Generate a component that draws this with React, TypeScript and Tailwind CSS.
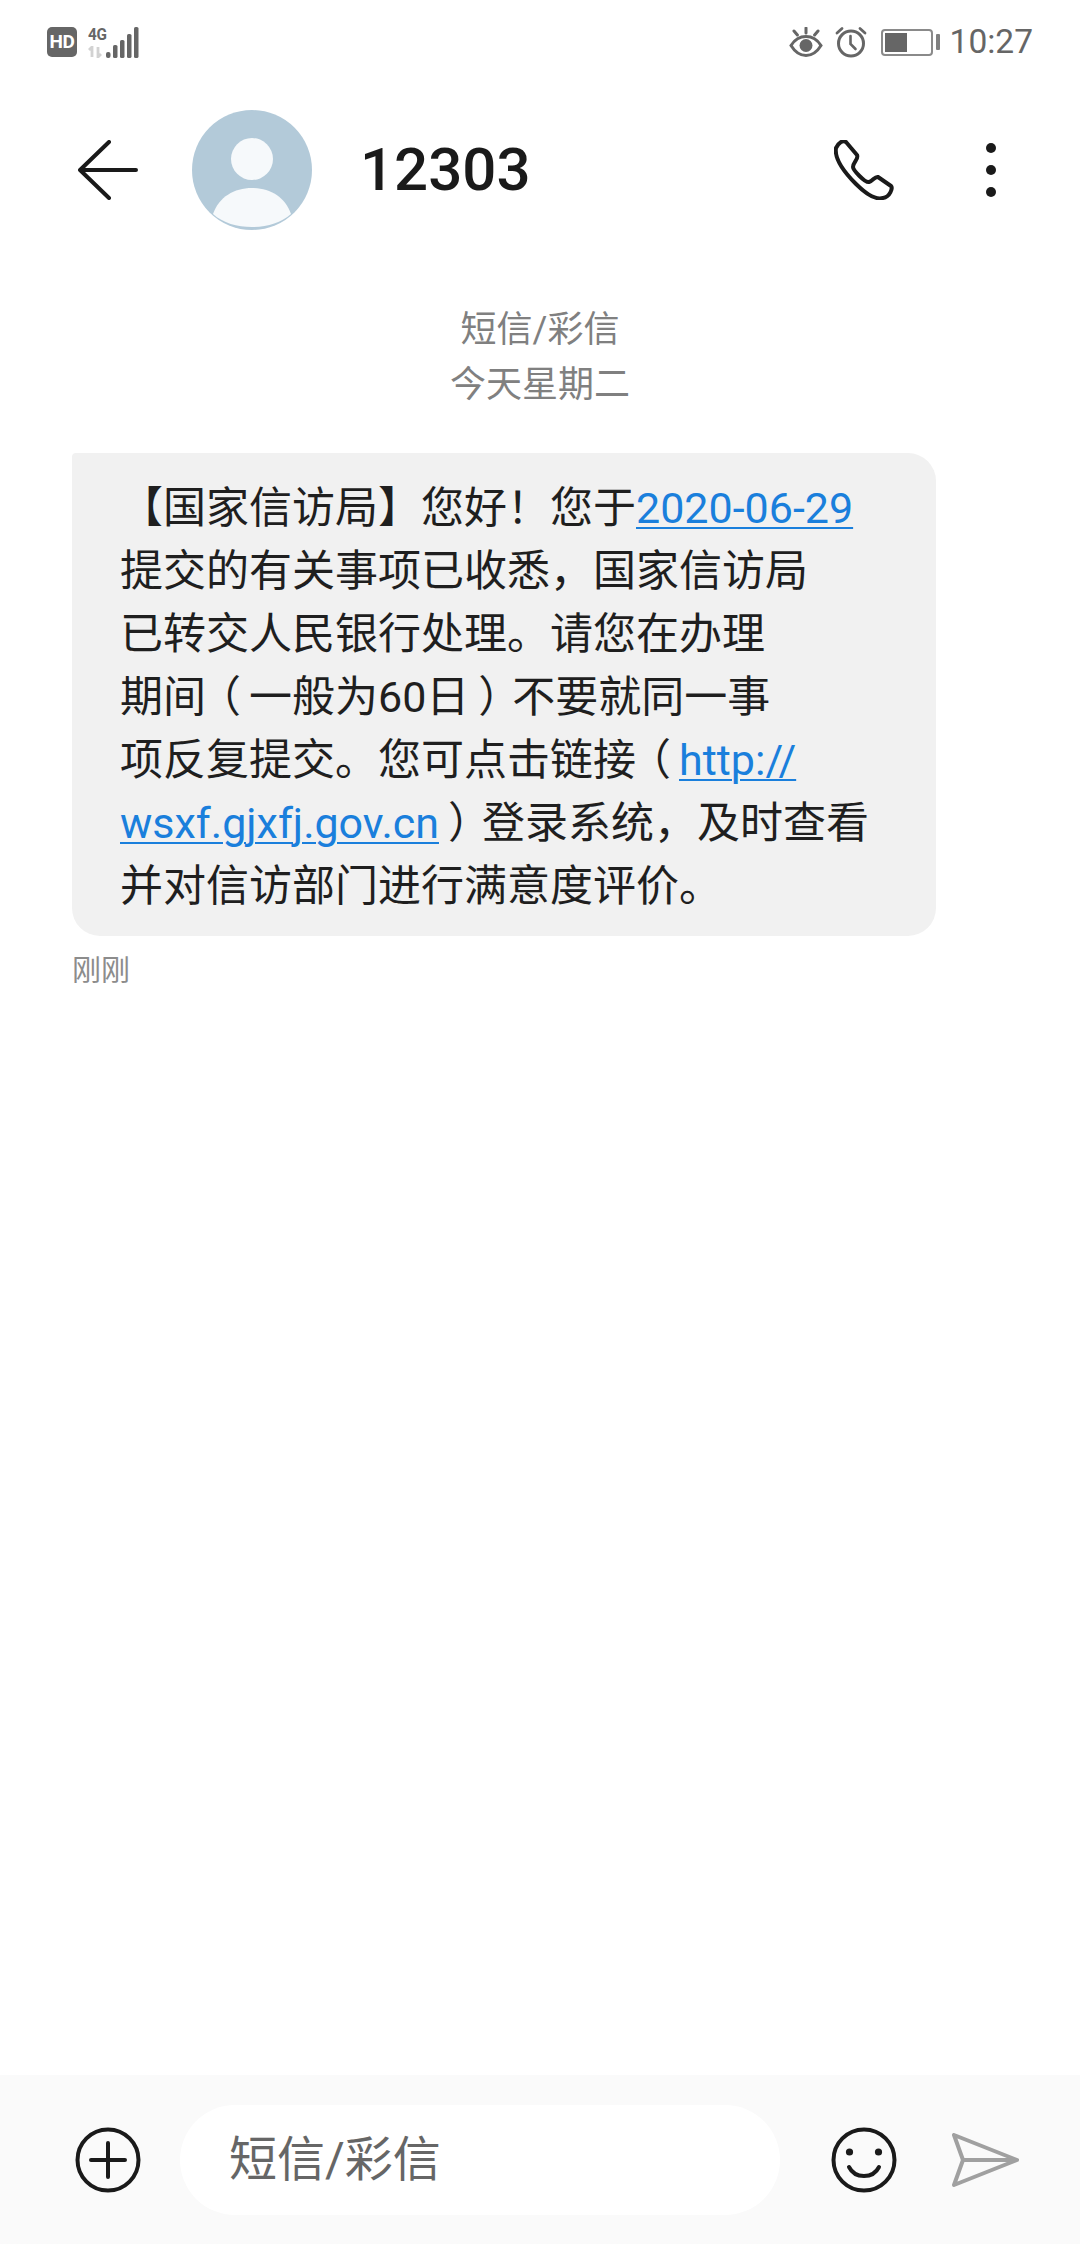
import React from "react";

const CJK = "font-['Roboto','Noto_Sans_CJK_SC',sans-serif]";

function Signal() {
  return (
    <div className="flex items-end h-[31px] ml-[11px]">
      <div className="flex flex-col w-[18px] h-[31px]">
        <span className="text-[17px] leading-[15px] font-bold text-[#666666] font-['Roboto',sans-serif] tracking-[-0.3px] scale-x-90 origin-left">4G</span>
        <svg width="16" height="12" viewBox="0 0 16 12" className="mt-[4px]">
          <path d="M4 11V1L1 4M10 1v10l3-3" fill="none" stroke="#d2d2d2" strokeWidth="2.8" />
        </svg>
      </div>
      <svg width="34" height="31" viewBox="0 0 34 31">
        <g fill="#666666">
          <rect x="0" y="25" width="4.5" height="6" rx="2" />
          <rect x="7" y="18" width="4.5" height="13" rx="1.6" />
          <rect x="14" y="13" width="4.5" height="18" rx="1.6" />
          <rect x="21" y="7" width="4.5" height="24" rx="1.6" />
          <rect x="28" y="0" width="4.5" height="31" rx="1.6" />
        </g>
      </svg>
    </div>
  );
}

function Eye() {
  return (
    <svg width="34" height="31" viewBox="0 0 34 31" fill="none" stroke="#666666" strokeLinecap="round">
      <path d="M2 18.5C6 12 11 9.5 17 9.5S28 12 32 18.5C28 25 23 28.5 17 28.5S6 25 2 18.5Z" strokeWidth="3" />
      <circle cx="17" cy="18.5" r="6.500" fill="#666666" stroke="none" />
      <path d="M17 1v5M5 4l3.4 4M29 4l-3.4 4" strokeWidth="3" />
    </svg>
  );
}

function Alarm() {
  return (
    <svg width="32" height="32" viewBox="0 0 32 32" fill="none" stroke="#666666" strokeLinecap="round">
      <circle cx="16" cy="17.5" r="12.5" strokeWidth="3" />
      <path d="M15.5 10v8l5 5" strokeWidth="2.6" />
      <path d="M2 7l5-4.5M30 7l-5-4.5" strokeWidth="2.8" />
    </svg>
  );
}

function Battery() {
  return (
    <div className="flex items-center">
      <div className="w-[52px] h-[27px] rounded-[4px] border-2 border-[#8a8a8a] p-[2px]">
        <div className="w-[22px] h-full bg-[#666666]" />
      </div>
      <div className="w-[4px] h-[16px] ml-[3px] rounded-[1px] bg-[#808080]" />
    </div>
  );
}

function Back() {
  return (
    <svg width="60" height="60" viewBox="0 0 60 60" fill="none" stroke="#1a1a1a" strokeWidth="4" strokeLinecap="round" strokeLinejoin="round">
      <path d="M58 30H2M31 2L2 30l29 28" />
    </svg>
  );
}

function Avatar() {
  return (
    <svg width="120" height="120" viewBox="0 0 120 120" className="shrink-0">
      <circle cx="60" cy="60" r="60" fill="#b3cad9" />
      <circle cx="60" cy="49" r="21" fill="#f6f9fb" />
      <path d="M21 104C27 87 42 78 60 78s33 9 39 26C89 113 75 117 60 117S31 113 21 104Z" fill="#f6f9fb" />
    </svg>
  );
}

function Phone() {
  return (
    <svg width="60" height="60" viewBox="0 0 60 60" fill="none" stroke="#1a1a1a" strokeWidth="4" strokeLinejoin="round">
      <path d="M2 8C5 2 9 0 12 2L23 15C25 19 19 22 19 27C19 30 31 43 35 42C39 41 41 36 44 37L57 46C59 48 56 57 49 58C42 60 32 54 22 44C12 34 0 20 2 8Z" />
    </svg>
  );
}

function Plus() {
  return (
    <svg width="66" height="66" viewBox="0 0 66 66" fill="none" stroke="#1a1a1a" strokeLinecap="round">
      <circle cx="33" cy="33" r="30.5" strokeWidth="4" />
      <path d="M33 16v34M16 33h34" strokeWidth="4" />
    </svg>
  );
}

function Smile() {
  return (
    <svg width="66" height="66" viewBox="0 0 66 66" fill="none" stroke="#1a1a1a" strokeLinecap="round">
      <circle cx="33" cy="33" r="30.5" strokeWidth="4" />
      <circle cx="18.500" cy="25" r="3.600" fill="#1a1a1a" stroke="none" />
      <circle cx="47.500" cy="25" r="3.600" fill="#1a1a1a" stroke="none" />
      <path d="M18 40C21 46 27 49 33 49S45 46 48 40" strokeWidth="4" />
    </svg>
  );
}

function Send() {
  return (
    <svg width="68" height="56" viewBox="0 0 68 56" fill="none" stroke="#a0a0a0" strokeWidth="4" strokeLinecap="round" strokeLinejoin="round">
      <path d="M3 3L66 28L3 53L12 28ZM12 28H66" />
    </svg>
  );
}

const Link = ({ children }: { children: React.ReactNode }) => (
  <span className="text-[#1a7fdc] underline decoration-[2px] underline-offset-[4px]">{children}</span>
);

const OpenParen = () => <span className="[font-feature-settings:'halt'] ml-[13.5px] mr-[8px]">（</span>;
const CloseParen = () => <span className="[font-feature-settings:'halt'] ml-[9px] mr-[12.5px]">）</span>;

export default function App() {
  return (
    <div className={`${CJK} w-[1080px] h-[2244px] flex flex-col bg-white overflow-hidden`}>
      <div className="h-[85px] shrink-0 flex items-center justify-between pl-[47px] pr-[47px] pb-[1px]">
        <div className="flex items-center">
          <div className="w-[30px] h-[30px] rounded-[5px] bg-[#666666] text-white text-[19px] font-bold flex items-center justify-center font-['Roboto',sans-serif] tracking-[-0.5px]">
            HD
          </div>
          <Signal />
        </div>
        <div className="flex items-center">
          <Eye />
          <div className="ml-[12px]"><Alarm /></div>
          <div className="ml-[14px]"><Battery /></div>
          <span className="ml-[10px] text-[33.5px] leading-none text-[#666666] font-['Roboto',sans-serif]">10:27</span>
        </div>
      </div>

      <div className="h-[168px] shrink-0 flex items-center pl-[78px] pr-[84px] pt-[2px]">
        <Back />
        <div className="ml-[54px]"><Avatar /></div>
        <span className="ml-[48px] text-[60px] leading-none font-medium text-[#1a1a1a] font-['Roboto',sans-serif]">12303</span>
        <div className="ml-auto"><Phone /></div>
        <div className="ml-[92px] flex flex-col gap-[12px]">
          <span className="w-[10px] h-[10px] rounded-full bg-[#1a1a1a]" />
          <span className="w-[10px] h-[10px] rounded-full bg-[#1a1a1a]" />
          <span className="w-[10px] h-[10px] rounded-full bg-[#1a1a1a]" />
        </div>
      </div>

      <div className="flex-1 flex flex-col pl-[72px]">
        <div className="mt-[50px] -ml-[72px] flex flex-col items-center text-[36px] leading-[55px] text-[#808080]">
          <span>短信/彩信</span>
          <span>今天星期二</span>
        </div>
        <div className="mt-[40px] w-[864px] h-[483px] rounded-[28px] rounded-tl-[4px] bg-[#f1f1f1] pl-[48px] pt-[24px] text-[43px] leading-[63px] text-[#1f1f1f] whitespace-nowrap">
          <div>【国家信访局】您好！您于<Link>2020-06-29</Link></div>
          <div>提交的有关事项已收悉，国家信访局</div>
          <div>已转交人民银行处理。请您在办理</div>
          <div>期间<OpenParen />一般为60日<CloseParen />不要就同一事</div>
          <div>项反复提交。您可点击链接<OpenParen /><Link>http://</Link></div>
          <div><Link>wsxf.gjxfj.gov.cn</Link><CloseParen />登录系统，及时查看</div>
          <div>并对信访部门进行满意度评价。</div>
        </div>
        <div className="mt-[16px] text-[29px] leading-[38px] text-[#8c8c8c]">刚刚</div>
      </div>

      <div className="h-[169px] shrink-0 bg-[#fafafa] flex items-center pl-[75px]">
        <Plus />
        <div className="ml-[39px] w-[600px] h-[110px] rounded-[55px] bg-white flex items-center pl-[49px] text-[48px] text-[#666666]">
          短信/彩信
        </div>
        <div className="ml-[51px]"><Smile /></div>
        <div className="ml-[54px]"><Send /></div>
      </div>
    </div>
  );
}
